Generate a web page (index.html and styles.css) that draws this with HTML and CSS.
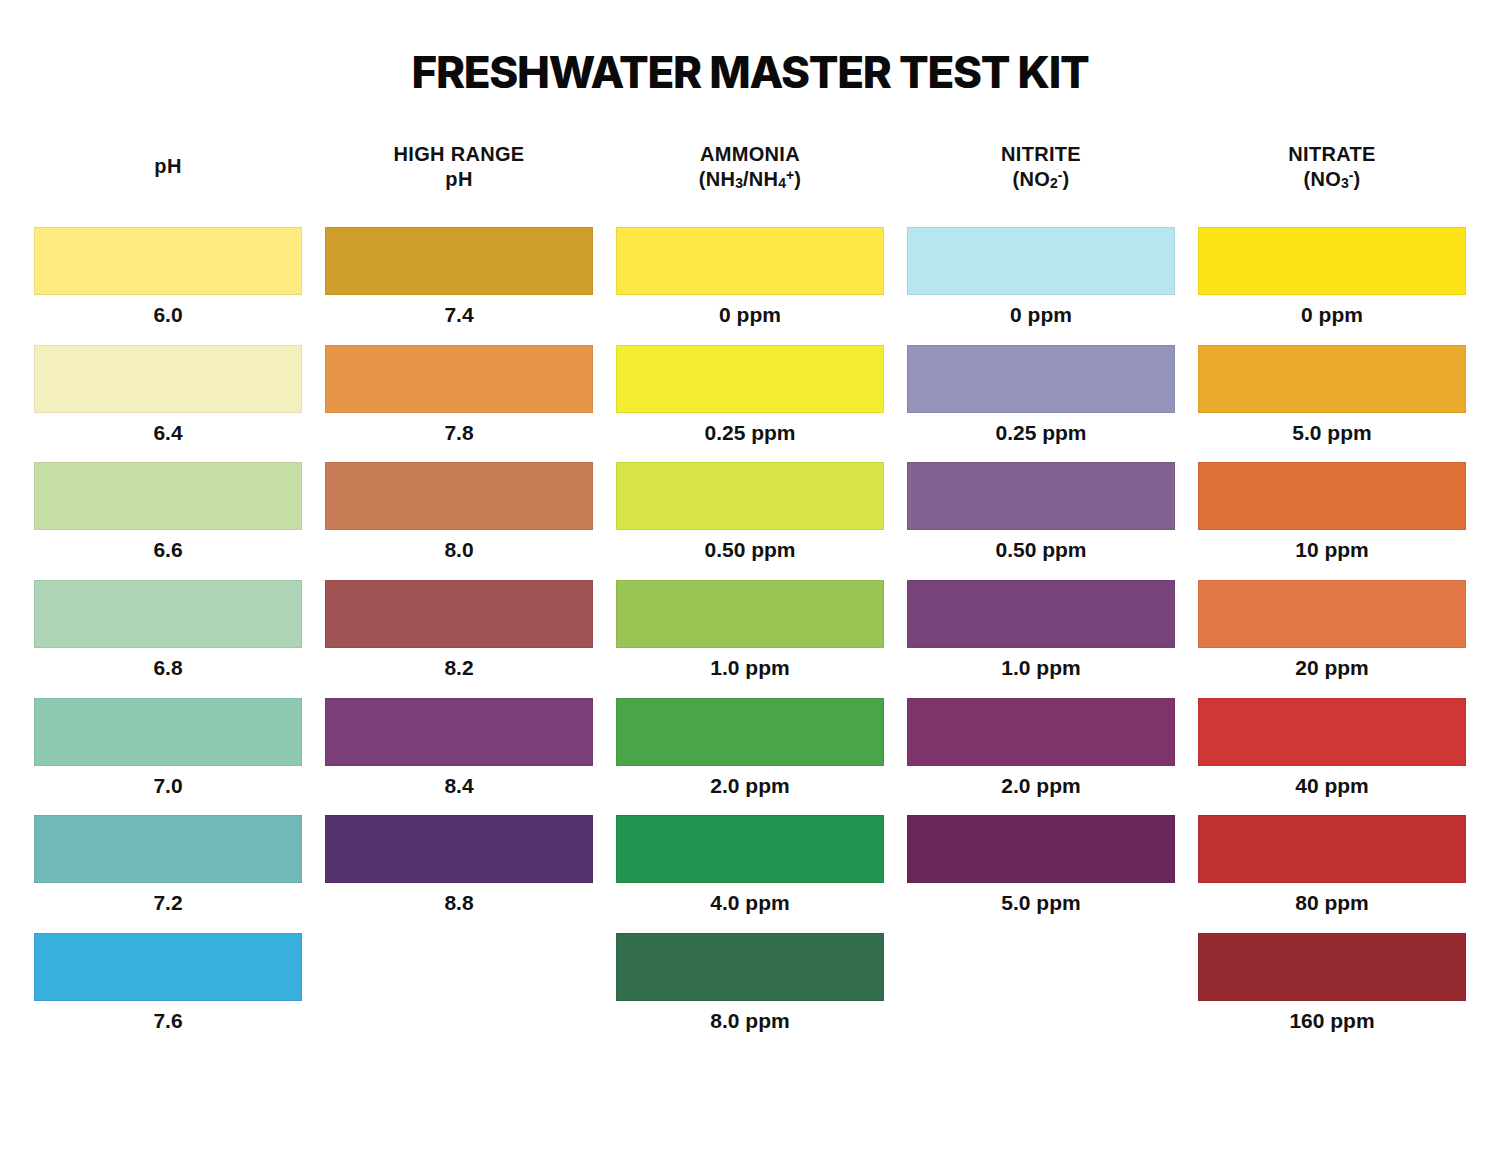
FILE: index.html
```html
<!DOCTYPE html>
<html>
<head>
<meta charset="utf-8">
<link rel="stylesheet" href="styles.css">
</head>
<body>
<div class="page">
  <h1 class="title">FRESHWATER MASTER TEST KIT</h1>
  <div class="chart">
    <div class="col">
      <div class="head"><div>pH</div></div>
      <div class="item"><div class="sw" style="background:#FDEB7F"></div><div class="lab">6.0</div></div>
      <div class="item"><div class="sw" style="background:#F3F0BD"></div><div class="lab">6.4</div></div>
      <div class="item"><div class="sw" style="background:#C6DFA6"></div><div class="lab">6.6</div></div>
      <div class="item"><div class="sw" style="background:#ACD4B5"></div><div class="lab">6.8</div></div>
      <div class="item"><div class="sw" style="background:#8DC9B0"></div><div class="lab">7.0</div></div>
      <div class="item"><div class="sw" style="background:#72BAB7"></div><div class="lab">7.2</div></div>
      <div class="item"><div class="sw" style="background:#38AFDC"></div><div class="lab">7.6</div></div>
    </div>
    <div class="col">
      <div class="head"><div>HIGH RANGE<br>pH</div></div>
      <div class="item"><div class="sw" style="background:#CF9E2B"></div><div class="lab">7.4</div></div>
      <div class="item"><div class="sw" style="background:#E69646"></div><div class="lab">7.8</div></div>
      <div class="item"><div class="sw" style="background:#C87C55"></div><div class="lab">8.0</div></div>
      <div class="item"><div class="sw" style="background:#A15353"></div><div class="lab">8.2</div></div>
      <div class="item"><div class="sw" style="background:#7B3F79"></div><div class="lab">8.4</div></div>
      <div class="item"><div class="sw" style="background:#57336E"></div><div class="lab">8.8</div></div>
    </div>
    <div class="col">
      <div class="head"><div>AMMONIA<br>(NH<sub>3</sub>/NH<sub>4</sub><sup>+</sup>)</div></div>
      <div class="item"><div class="sw" style="background:#FDE744"></div><div class="lab">0 ppm</div></div>
      <div class="item"><div class="sw" style="background:#F3EE31"></div><div class="lab">0.25 ppm</div></div>
      <div class="item"><div class="sw" style="background:#D8E449"></div><div class="lab">0.50 ppm</div></div>
      <div class="item"><div class="sw" style="background:#9AC454"></div><div class="lab">1.0 ppm</div></div>
      <div class="item"><div class="sw" style="background:#4AA448"></div><div class="lab">2.0 ppm</div></div>
      <div class="item"><div class="sw" style="background:#22944F"></div><div class="lab">4.0 ppm</div></div>
      <div class="item"><div class="sw" style="background:#326D4D"></div><div class="lab">8.0 ppm</div></div>
    </div>
    <div class="col">
      <div class="head"><div>NITRITE<br>(NO<sub>2</sub><sup>-</sup>)</div></div>
      <div class="item"><div class="sw" style="background:#B8E6F0"></div><div class="lab">0 ppm</div></div>
      <div class="item"><div class="sw" style="background:#9393BC"></div><div class="lab">0.25 ppm</div></div>
      <div class="item"><div class="sw" style="background:#836192"></div><div class="lab">0.50 ppm</div></div>
      <div class="item"><div class="sw" style="background:#78437B"></div><div class="lab">1.0 ppm</div></div>
      <div class="item"><div class="sw" style="background:#7E336A"></div><div class="lab">2.0 ppm</div></div>
      <div class="item"><div class="sw" style="background:#682859"></div><div class="lab">5.0 ppm</div></div>
    </div>
    <div class="col">
      <div class="head"><div>NITRATE<br>(NO<sub>3</sub><sup>-</sup>)</div></div>
      <div class="item"><div class="sw" style="background:#FDE419"></div><div class="lab">0 ppm</div></div>
      <div class="item"><div class="sw" style="background:#EAAA2E"></div><div class="lab">5.0 ppm</div></div>
      <div class="item"><div class="sw" style="background:#DE7135"></div><div class="lab">10 ppm</div></div>
      <div class="item"><div class="sw" style="background:#E27746"></div><div class="lab">20 ppm</div></div>
      <div class="item"><div class="sw" style="background:#CF3636"></div><div class="lab">40 ppm</div></div>
      <div class="item"><div class="sw" style="background:#BF3033"></div><div class="lab">80 ppm</div></div>
      <div class="item"><div class="sw" style="background:#952B30"></div><div class="lab">160 ppm</div></div>
    </div>
  </div>
</div>
</body>
</html>
```

FILE: styles.css
```css
html, body {
  margin: 0;
  padding: 0;
  background: #ffffff;
}
body {
  font-family: "Liberation Sans", Arial, sans-serif;
  color: #111111;
}
.page {
  width: 1500px;
  height: 1159px;
  box-sizing: border-box;
  padding: 44px 34px 0;
}
.title {
  margin: 0;
  height: 56px;
  line-height: 56px;
  text-align: center;
  font-family: "Inter", "Liberation Sans", sans-serif;
  font-weight: 800;
  font-size: 44px;
  letter-spacing: -1.3px;
  color: #0a0a0a;
}
.chart {
  display: grid;
  grid-template-columns: repeat(5, 268px);
  column-gap: 23px;
}
.col {
  display: flex;
  flex-direction: column;
}
.head {
  height: 127px;
  box-sizing: border-box;
  padding-top: 6px;
  display: flex;
  align-items: center;
  justify-content: center;
  text-align: center;
  font-weight: 700;
  font-size: 20px;
  letter-spacing: 0.3px;
  line-height: 25px;
}
.head sub, .head sup {
  font-size: 14px;
  line-height: 0;
  letter-spacing: 0;
}
.head sub {
  vertical-align: -2px;
}
.head sup {
  vertical-align: 6px;
}
.item {
  display: flex;
  flex-direction: column;
}
.sw {
  height: 68px;
  box-sizing: border-box;
  border: 1px solid rgba(0, 0, 0, 0.07);
}
.lab {
  height: 49.67px;
  box-sizing: border-box;
  padding-top: 8px;
  line-height: 24px;
  text-align: center;
  font-weight: 700;
  font-size: 21px;
}
```
